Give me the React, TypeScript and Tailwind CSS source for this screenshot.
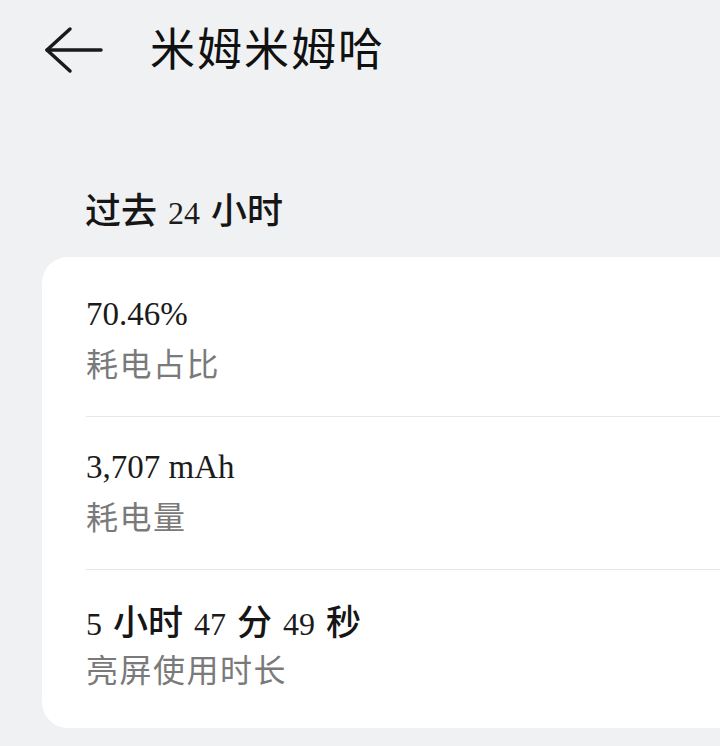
import React from "react";

const serif = { fontFamily: '"Liberation Serif", "Noto Sans CJK SC", serif' };

function Row({
  value,
  label,
  last,
  first,
}: {
  value: React.ReactNode;
  label: string;
  last?: boolean;
  first?: boolean;
}) {
  return (
    <div
      className={`pr-[44px] ${first ? "pt-[37px]" : "pt-[30px]"} ${
        last ? "pb-[40px]" : "pb-[34px] border-b border-[#e6e6e8]"
      }`}
    >
      <div
        className="h-[40px] leading-[40px] text-[33px] text-[#1b1b1b] whitespace-nowrap"
        style={serif}
      >
        {value}
      </div>
      <div className="mt-[8px] h-[40px] leading-[40px] text-[32px] tracking-[1.5px] text-[#7a7a7a] font-['Noto_Sans_CJK_SC',sans-serif]">
        {label}
      </div>
    </div>
  );
}

function Cjk({ children, big }: { children: React.ReactNode; big?: boolean }) {
  return (
    <span
      className={`${big ? "text-[36px]" : "text-[35px]"} font-medium text-[#161616] font-['Noto_Sans_CJK_SC',sans-serif]`}
    >
      {children}
    </span>
  );
}

function Num({ children }: { children: React.ReactNode }) {
  return (
    <span className="text-[32px] mx-[11px]" style={serif}>
      {children}
    </span>
  );
}

export default function App() {
  return (
    <div className="w-[720px] h-[746px] overflow-hidden bg-[#f0f1f3] font-['Noto_Sans_CJK_SC',sans-serif]">
      <header className="h-[92px] flex items-center">
        <svg
          width="60"
          height="92"
          viewBox="0 0 60 92"
          className="ml-[44px] shrink-0"
          fill="none"
          stroke="#1a1a1a"
          strokeWidth="3.5"
          strokeLinecap="round"
          strokeLinejoin="round"
        >
          <path d="M3 50 H57" />
          <path d="M26 29 L3 50 L26 71" />
        </svg>
        <h1 className="ml-[46px] text-[45px] leading-[45px] font-normal text-[#111111] tracking-[2px]">
          米姆米姆哈
        </h1>
      </header>

      <div className="mt-[100px] pl-[85px] h-[32px] leading-[32px] text-[#1b1b1b] whitespace-nowrap">
        <Cjk big>过去</Cjk>
        <Num>24</Num>
        <Cjk big>小时</Cjk>
      </div>

      <div className="mt-[33px] ml-[42px] w-[720px] bg-white rounded-[26px] pl-[44px]">
        <Row first value="70.46%" label="耗电占比" />
        <Row value="3,707 mAh" label="耗电量" />
        <Row
          last
          value={
            <>
              <span className="text-[32px] mr-[11px]">5</span>
              <Cjk>小时</Cjk>
              <Num>47</Num>
              <Cjk>分</Cjk>
              <Num>49</Num>
              <Cjk>秒</Cjk>
            </>
          }
          label="亮屏使用时长"
        />
      </div>
    </div>
  );
}
